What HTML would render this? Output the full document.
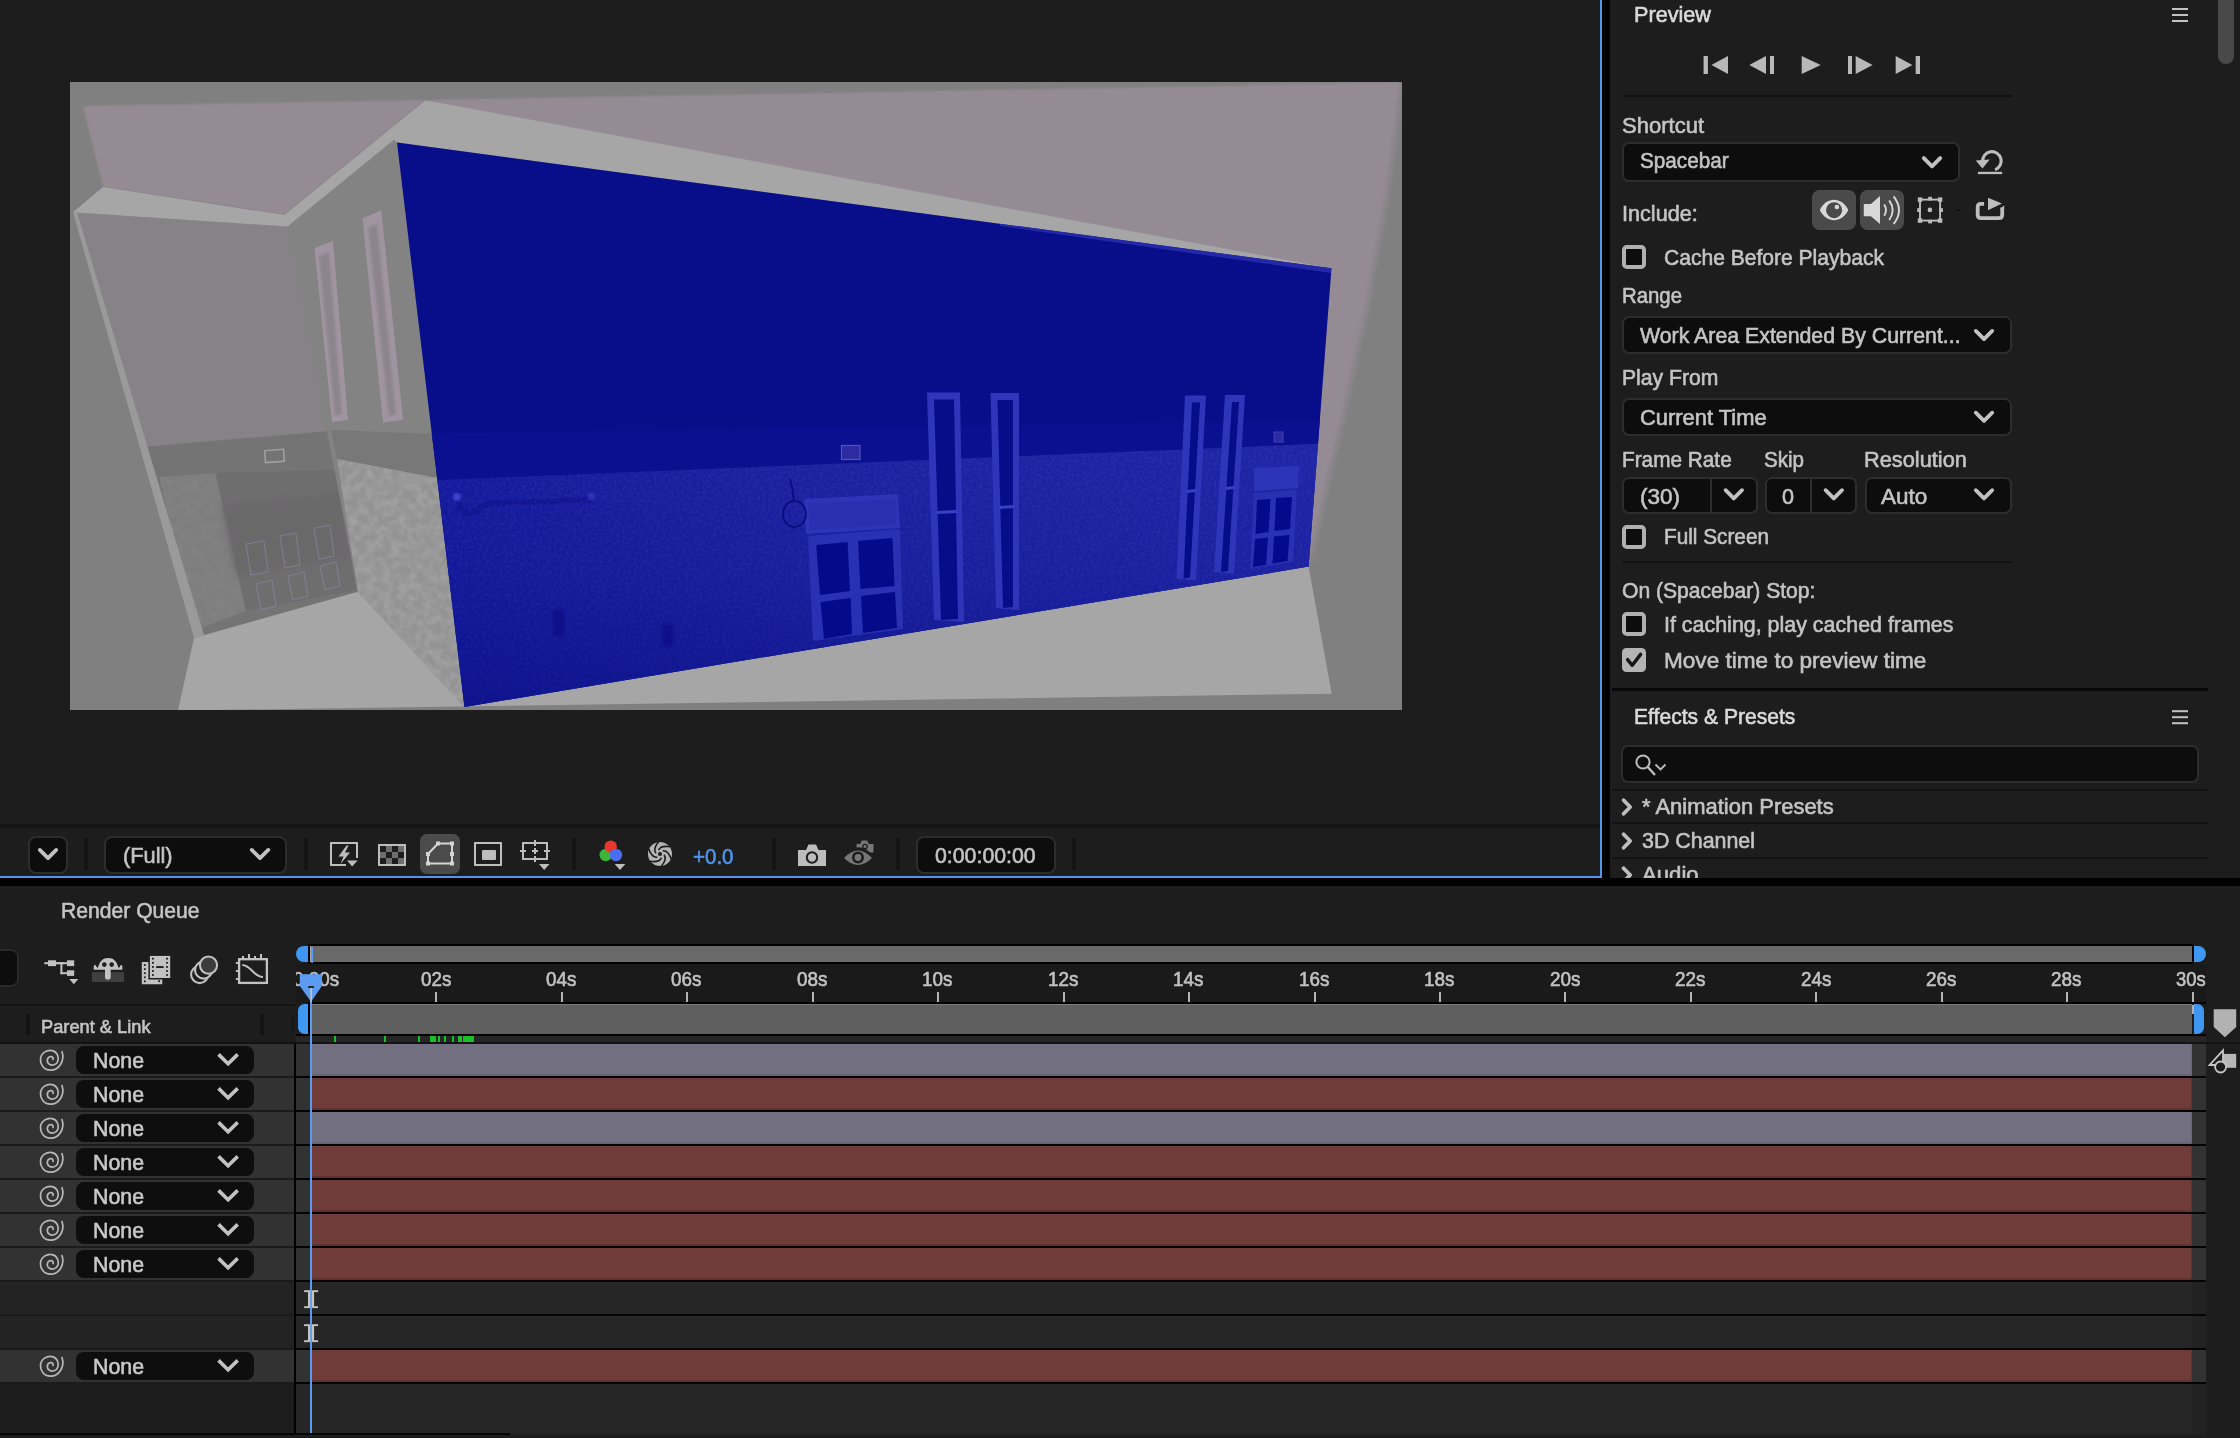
<!DOCTYPE html>
<html><head><meta charset="utf-8"><title>After Effects</title>
<style>
html,body{margin:0;padding:0;}
body{width:2240px;height:1438px;background:#1d1d1d;overflow:hidden;position:relative;font-family:"Liberation Sans",sans-serif;}
#root{position:absolute;left:0;top:0;width:2240px;height:1438px;overflow:hidden;}
#root>div{position:absolute;box-sizing:border-box;}
.t{white-space:nowrap;line-height:1;transform-origin:0 0;-webkit-text-stroke:0.6px currentColor;}
svg{position:absolute;left:0;top:0;}
</style></head><body><div id="root">
<div style="left:0px;top:824px;width:1600px;height:4px;background:#151515;"></div>
<div style="left:1600px;top:0px;width:2px;height:878px;background:#5296ec;"></div>
<div style="left:0px;top:876px;width:1602px;height:2px;background:#5296ec;"></div>
<div style="left:1602px;top:0px;width:8px;height:878px;background:#000;"></div>
<div style="left:0px;top:878px;width:2240px;height:8px;background:#000;"></div>
<div style="left:28px;top:836px;width:40px;height:38px;background:#0d0d0d;border:2px solid #2d2d2d;border-radius:8px;"></div>
<div style="left:84px;top:838px;width:4px;height:32px;background:#131313;"></div>
<div style="left:104px;top:836px;width:183px;height:38px;background:#0d0d0d;border:2px solid #2d2d2d;border-radius:8px;"></div>
<div class="t" style="left:122.7px;top:845.18px;font-size:22px;color:#c4c4c4;transform:scaleX(0.9900);">(Full)</div>
<div style="left:304px;top:838px;width:4px;height:32px;background:#131313;"></div>
<div style="left:420px;top:834px;width:40px;height:40px;background:#4b4b4b;border-radius:7px;"></div>
<div style="left:572px;top:838px;width:4px;height:32px;background:#131313;"></div>
<div class="t" style="left:692.5px;top:845.98px;font-size:22px;color:#4e94ea;transform:scaleX(0.9325);">+0.0</div>
<div style="left:772px;top:838px;width:4px;height:32px;background:#131313;"></div>
<div style="left:896px;top:838px;width:4px;height:32px;background:#131313;"></div>
<div style="left:916px;top:836px;width:140px;height:38px;background:#0d0d0d;border:2px solid #2d2d2d;border-radius:8px;"></div>
<div class="t" style="left:935.2px;top:844.98px;font-size:22px;color:#c4c4c4;transform:scaleX(0.9684);">0:00:00:00</div>
<div style="left:1072px;top:838px;width:4px;height:32px;background:#131313;"></div>
<div style="left:2218px;top:-10px;width:16px;height:74.2px;background:#494949;border-radius:8px;"></div>
<div class="t" style="left:1634.3px;top:3.98px;font-size:22px;color:#dadada;transform:scaleX(0.9841);">Preview</div>
<div style="left:1622px;top:94.5px;width:390px;height:2px;background:#121212;"></div>
<div class="t" style="left:1622.3px;top:114.78px;font-size:22px;color:#c4c4c4;transform:scaleX(1.0008);">Shortcut</div>
<div style="left:1622px;top:142px;width:338px;height:40px;background:#0d0d0d;border:2px solid #2d2d2d;border-radius:7px;"></div>
<div class="t" style="left:1640px;top:150.38px;font-size:22px;color:#c4c4c4;transform:scaleX(0.9408);">Spacebar</div>
<div class="t" style="left:1622.3px;top:203.38px;font-size:22px;color:#c4c4c4;transform:scaleX(0.9824);">Include:</div>
<div style="left:1812px;top:190px;width:44px;height:40px;background:#4a4a4a;border-radius:7.5px;"></div>
<div style="left:1860px;top:190px;width:44px;height:40px;background:#4a4a4a;border-radius:7.5px;"></div>
<div style="left:1956px;top:208.8px;width:4.2px;height:2.1px;background:#0f0f0f;"></div>
<div style="left:1622px;top:245px;width:24.3px;height:24.3px;background:#0d0d0d;border:4px solid #b0b0b0;border-radius:4.8px;"></div>
<div class="t" style="left:1664.3px;top:247.08px;font-size:22px;color:#c4c4c4;transform:scaleX(0.9569);">Cache Before Playback</div>
<div class="t" style="left:1622.3px;top:284.98px;font-size:22px;color:#c4c4c4;transform:scaleX(0.9255);">Range</div>
<div style="left:1622px;top:316px;width:390px;height:38px;background:#0d0d0d;border:2px solid #2d2d2d;border-radius:7px;"></div>
<div class="t" style="left:1640px;top:325.28px;font-size:22px;color:#c4c4c4;transform:scaleX(0.9687);">Work Area Extended By Current...</div>
<div class="t" style="left:1622.3px;top:367.08px;font-size:22px;color:#c4c4c4;transform:scaleX(0.9607);">Play From</div>
<div style="left:1622px;top:398px;width:390px;height:38px;background:#0d0d0d;border:2px solid #2d2d2d;border-radius:7px;"></div>
<div class="t" style="left:1640px;top:407.08px;font-size:22px;color:#c4c4c4;transform:scaleX(0.9957);">Current Time</div>
<div class="t" style="left:1622.3px;top:449.08px;font-size:22px;color:#c4c4c4;transform:scaleX(0.9445);">Frame Rate</div>
<div class="t" style="left:1764.3px;top:449.08px;font-size:22px;color:#c4c4c4;transform:scaleX(0.9346);">Skip</div>
<div class="t" style="left:1864.3px;top:449.08px;font-size:22px;color:#c4c4c4;transform:scaleX(0.9899);">Resolution</div>
<div style="left:1622px;top:476.5px;width:135.6px;height:37px;background:#0d0d0d;border:2px solid #2d2d2d;border-radius:7px;"></div>
<div style="left:1709.8px;top:478.5px;width:2.2px;height:33px;background:#2d2d2d;"></div>
<div class="t" style="left:1640px;top:485.58px;font-size:22px;color:#c4c4c4;transform:scaleX(1.0224);">(30)</div>
<div style="left:1765px;top:476.5px;width:92px;height:37px;background:#0d0d0d;border:2px solid #2d2d2d;border-radius:7px;"></div>
<div style="left:1809.8px;top:478.5px;width:2.2px;height:33px;background:#2d2d2d;"></div>
<div class="t" style="left:1782px;top:485.58px;font-size:22px;color:#c4c4c4;transform:scaleX(0.9807);">0</div>
<div style="left:1864.5px;top:476.5px;width:147.5px;height:37px;background:#0d0d0d;border:2px solid #2d2d2d;border-radius:7px;"></div>
<div class="t" style="left:1881.4px;top:485.58px;font-size:22px;color:#c4c4c4;transform:scaleX(1.0230);">Auto</div>
<div style="left:1622px;top:524.5px;width:24.3px;height:24.3px;background:#0d0d0d;border:4px solid #b0b0b0;border-radius:4.8px;"></div>
<div class="t" style="left:1664.3px;top:526.38px;font-size:22px;color:#c4c4c4;transform:scaleX(0.9436);">Full Screen</div>
<div style="left:1622px;top:560.5px;width:390px;height:2px;background:#121212;"></div>
<div class="t" style="left:1622.3px;top:579.98px;font-size:22px;color:#c4c4c4;transform:scaleX(0.9585);">On (Spacebar) Stop:</div>
<div style="left:1622px;top:612px;width:24.3px;height:24.3px;background:#0d0d0d;border:4px solid #b0b0b0;border-radius:4.8px;"></div>
<div class="t" style="left:1664.3px;top:614.38px;font-size:22px;color:#c4c4c4;transform:scaleX(0.9739);">If caching, play cached frames</div>
<div style="left:1622px;top:647.9px;width:24.3px;height:24.3px;background:#b4b4b4;border-radius:4.5px;"></div>
<div class="t" style="left:1664.3px;top:650.18px;font-size:22px;color:#c4c4c4;transform:scaleX(1.0265);">Move time to preview time</div>
<div style="left:1612px;top:688px;width:596px;height:2.5px;background:#080808;"></div>
<div class="t" style="left:1634.3px;top:706.38px;font-size:22px;color:#dadada;transform:scaleX(0.9588);">Effects &amp; Presets</div>
<div style="left:1620.5px;top:745px;width:578.5px;height:38px;background:#0d0d0d;border:2px solid #2d2d2d;border-radius:7px;"></div>
<div style="left:1612px;top:788.5px;width:596px;height:2px;background:#121212;"></div>
<div class="t" style="left:1642px;top:795.68px;font-size:22px;color:#c4c4c4;transform:scaleX(0.9985);">* Animation Presets</div>
<div style="left:1612px;top:822px;width:596px;height:2px;background:#121212;"></div>
<div class="t" style="left:1642.3px;top:829.58px;font-size:22px;color:#c4c4c4;transform:scaleX(0.9725);">3D Channel</div>
<div style="left:1612px;top:857px;width:596px;height:2px;background:#121212;"></div>
<div style="left:1612px;top:858px;width:600px;height:20px;overflow:hidden;"><div class="t" style="position:absolute;left:30.3px;top:5.68px;font-size:22px;color:#c4c4c4;transform:scaleX(1.0059)">Audio</div><svg width="40" height="20" style="left:0;top:0"><path d="M11.6,10.2 L18.2,17 L11.6,23.8" fill="none" stroke="#bdbdbd" stroke-width="3.8" stroke-linejoin="round" stroke-linecap="round"/></svg></div>
<div class="t" style="left:60.6px;top:899.98px;font-size:22px;color:#c4c4c4;transform:scaleX(0.9603);">Render Queue</div>
<div style="left:-8px;top:948.5px;width:27px;height:38.5px;background:#0d0d0d;border:2px solid #2a2a2a;border-radius:8px;"></div>
<div style="left:308.2px;top:944px;width:1885.8px;height:20px;background:#000;"></div>
<div style="left:309.7px;top:946px;width:1882.3px;height:16px;background:#696969;"></div>
<div style="left:309.7px;top:946px;width:1.3px;height:16px;background:#a8a8a8;"></div>
<div style="left:311px;top:947px;width:1.9px;height:15.6px;background:#5b9cf2;border-radius:1px;"></div>
<div style="left:296px;top:946px;width:12.2px;height:16.1px;background:#3f97f2;border-radius:8.5px 0 0 8.5px;"></div>
<div style="left:2194px;top:946px;width:12px;height:16.2px;background:#3f97f2;border-radius:0 9px 9px 0;"></div>
<div style="left:296px;top:964px;width:1910px;height:38.5px;background:#1a1a1a;"></div>
<div style="left:296px;top:966px;width:60px;height:30px;overflow:hidden;"><div class="t" style="position:absolute;left:-3.5px;top:3.89px;font-size:19.5px;color:#c2c2c2;transform:scaleX(0.9669)">0:00s</div></div>
<div style="left:435.4px;top:992px;width:2px;height:10.5px;background:#b4b4b4;"></div>
<div class="t" style="left:420.5px;top:969.89px;font-size:19.5px;color:#c2c2c2;transform:scaleX(0.9669);">02s</div>
<div style="left:560.8px;top:992px;width:2px;height:10.5px;background:#b4b4b4;"></div>
<div class="t" style="left:546.0px;top:969.89px;font-size:19.5px;color:#c2c2c2;transform:scaleX(0.9669);">04s</div>
<div style="left:686.3px;top:992px;width:2px;height:10.5px;background:#b4b4b4;"></div>
<div class="t" style="left:671.4px;top:969.89px;font-size:19.5px;color:#c2c2c2;transform:scaleX(0.9669);">06s</div>
<div style="left:811.7px;top:992px;width:2px;height:10.5px;background:#b4b4b4;"></div>
<div class="t" style="left:796.9px;top:969.89px;font-size:19.5px;color:#c2c2c2;transform:scaleX(0.9669);">08s</div>
<div style="left:937.2px;top:992px;width:2px;height:10.5px;background:#b4b4b4;"></div>
<div class="t" style="left:922.3px;top:969.89px;font-size:19.5px;color:#c2c2c2;transform:scaleX(0.9669);">10s</div>
<div style="left:1062.6px;top:992px;width:2px;height:10.5px;background:#b4b4b4;"></div>
<div class="t" style="left:1047.8px;top:969.89px;font-size:19.5px;color:#c2c2c2;transform:scaleX(0.9669);">12s</div>
<div style="left:1188.1px;top:992px;width:2px;height:10.5px;background:#b4b4b4;"></div>
<div class="t" style="left:1173.2px;top:969.89px;font-size:19.5px;color:#c2c2c2;transform:scaleX(0.9669);">14s</div>
<div style="left:1313.5px;top:992px;width:2px;height:10.5px;background:#b4b4b4;"></div>
<div class="t" style="left:1298.7px;top:969.89px;font-size:19.5px;color:#c2c2c2;transform:scaleX(0.9669);">16s</div>
<div style="left:1439.0px;top:992px;width:2px;height:10.5px;background:#b4b4b4;"></div>
<div class="t" style="left:1424.1px;top:969.89px;font-size:19.5px;color:#c2c2c2;transform:scaleX(0.9669);">18s</div>
<div style="left:1564.4px;top:992px;width:2px;height:10.5px;background:#b4b4b4;"></div>
<div class="t" style="left:1549.6px;top:969.89px;font-size:19.5px;color:#c2c2c2;transform:scaleX(0.9669);">20s</div>
<div style="left:1689.9px;top:992px;width:2px;height:10.5px;background:#b4b4b4;"></div>
<div class="t" style="left:1675.0px;top:969.89px;font-size:19.5px;color:#c2c2c2;transform:scaleX(0.9669);">22s</div>
<div style="left:1815.3px;top:992px;width:2px;height:10.5px;background:#b4b4b4;"></div>
<div class="t" style="left:1800.5px;top:969.89px;font-size:19.5px;color:#c2c2c2;transform:scaleX(0.9669);">24s</div>
<div style="left:1940.8px;top:992px;width:2px;height:10.5px;background:#b4b4b4;"></div>
<div class="t" style="left:1926.0px;top:969.89px;font-size:19.5px;color:#c2c2c2;transform:scaleX(0.9669);">26s</div>
<div style="left:2066.2px;top:992px;width:2px;height:10.5px;background:#b4b4b4;"></div>
<div class="t" style="left:2051.4px;top:969.89px;font-size:19.5px;color:#c2c2c2;transform:scaleX(0.9669);">28s</div>
<div style="left:2191.7px;top:992px;width:2px;height:10.5px;background:#b4b4b4;"></div>
<div class="t" style="left:2175.8px;top:969.89px;font-size:19.5px;color:#c2c2c2;transform:scaleX(0.9415);">30s</div>
<div style="left:308.2px;top:1002px;width:1897.8px;height:2.2px;background:#000;"></div>
<div style="left:308.2px;top:1004px;width:4px;height:30px;background:#000;"></div>
<div style="left:312px;top:1004px;width:1880px;height:30px;background:#5f5f5f;border-top:1.5px solid #797979;"></div>
<div style="left:297.9px;top:1004px;width:10.3px;height:30px;background:#3f97f2;border-radius:6.5px 0 0 6.5px;"></div>
<div style="left:2194px;top:1004px;width:10.2px;height:30px;background:#3f97f2;border-radius:0 6.5px 6.5px 0;"></div>
<div style="left:2192px;top:1004.5px;width:1.8px;height:9.5px;background:#b0b0b0;"></div>
<div style="left:296px;top:1034px;width:1910px;height:2px;background:#000;"></div>
<div style="left:296px;top:1036px;width:1910px;height:6.3px;background:#262626;"></div>
<div style="left:334px;top:1036.3px;width:2px;height:5.6px;background:#17c127;"></div>
<div style="left:384px;top:1036.3px;width:2px;height:5.6px;background:#17c127;"></div>
<div style="left:418px;top:1036.3px;width:2px;height:5.6px;background:#17c127;"></div>
<div style="left:430px;top:1036.3px;width:6px;height:5.6px;background:#17c127;"></div>
<div style="left:438px;top:1036.3px;width:2.2px;height:5.6px;background:#17c127;"></div>
<div style="left:444.2px;top:1036.3px;width:1.8px;height:5.6px;background:#17c127;"></div>
<div style="left:452.2px;top:1036.3px;width:1.8px;height:5.6px;background:#17c127;"></div>
<div style="left:458px;top:1036.3px;width:4px;height:5.6px;background:#17c127;"></div>
<div style="left:463.4px;top:1036.3px;width:10.9px;height:5.6px;background:#17c127;"></div>
<div style="left:0px;top:1042.3px;width:2240px;height:1.9px;background:#131313;"></div>
<div style="left:0px;top:1003.6px;width:294.5px;height:2px;background:#131313;"></div>
<div style="left:26.4px;top:1014.3px;width:3.3px;height:21.2px;background:#131313;"></div>
<div style="left:260.3px;top:1014.3px;width:3.3px;height:21.2px;background:#131313;"></div>
<div style="left:292.1px;top:1014.3px;width:1.6px;height:21.2px;background:#161616;"></div>
<div class="t" style="left:40.5px;top:1016.82px;font-size:19px;color:#c4c4c4;transform:scaleX(0.9600);">Parent &amp; Link</div>
<div style="left:0px;top:1044px;width:294px;height:32.3px;background:#323232;"></div>
<div style="left:296px;top:1044px;width:1910px;height:32.3px;background:#323232;"></div>
<div style="left:312px;top:1044px;width:1880px;height:32.3px;background:#727080;border-bottom:2px solid #67657a;border-right:1.5px solid #67657a;"></div>
<div style="left:76px;top:1046px;width:178px;height:28px;background:#0e0e0e;border-radius:8px;"></div>
<div class="t" style="left:92.8px;top:1049.98px;font-size:22px;color:#c8c8c8;transform:scaleX(0.9697);">None</div>
<div style="left:0px;top:1076.3px;width:294px;height:1.7px;background:#1b1b1b;"></div>
<div style="left:296px;top:1076.3px;width:1910px;height:1.7px;background:#050505;"></div>
<div style="left:0px;top:1078px;width:294px;height:32.3px;background:#323232;"></div>
<div style="left:296px;top:1078px;width:1910px;height:32.3px;background:#323232;"></div>
<div style="left:312px;top:1078px;width:1880px;height:32.3px;background:#703c3a;border-bottom:2px solid #62302f;border-right:1.5px solid #62302f;"></div>
<div style="left:76px;top:1080px;width:178px;height:28px;background:#0e0e0e;border-radius:8px;"></div>
<div class="t" style="left:92.8px;top:1083.98px;font-size:22px;color:#c8c8c8;transform:scaleX(0.9697);">None</div>
<div style="left:0px;top:1110.3px;width:294px;height:1.7px;background:#1b1b1b;"></div>
<div style="left:296px;top:1110.3px;width:1910px;height:1.7px;background:#050505;"></div>
<div style="left:0px;top:1112px;width:294px;height:32.3px;background:#323232;"></div>
<div style="left:296px;top:1112px;width:1910px;height:32.3px;background:#323232;"></div>
<div style="left:312px;top:1112px;width:1880px;height:32.3px;background:#727080;border-bottom:2px solid #67657a;border-right:1.5px solid #67657a;"></div>
<div style="left:76px;top:1114px;width:178px;height:28px;background:#0e0e0e;border-radius:8px;"></div>
<div class="t" style="left:92.8px;top:1117.98px;font-size:22px;color:#c8c8c8;transform:scaleX(0.9697);">None</div>
<div style="left:0px;top:1144.3px;width:294px;height:1.7px;background:#1b1b1b;"></div>
<div style="left:296px;top:1144.3px;width:1910px;height:1.7px;background:#050505;"></div>
<div style="left:0px;top:1146px;width:294px;height:32.3px;background:#323232;"></div>
<div style="left:296px;top:1146px;width:1910px;height:32.3px;background:#323232;"></div>
<div style="left:312px;top:1146px;width:1880px;height:32.3px;background:#703c3a;border-bottom:2px solid #62302f;border-right:1.5px solid #62302f;"></div>
<div style="left:76px;top:1148px;width:178px;height:28px;background:#0e0e0e;border-radius:8px;"></div>
<div class="t" style="left:92.8px;top:1151.98px;font-size:22px;color:#c8c8c8;transform:scaleX(0.9697);">None</div>
<div style="left:0px;top:1178.3px;width:294px;height:1.7px;background:#1b1b1b;"></div>
<div style="left:296px;top:1178.3px;width:1910px;height:1.7px;background:#050505;"></div>
<div style="left:0px;top:1180px;width:294px;height:32.3px;background:#323232;"></div>
<div style="left:296px;top:1180px;width:1910px;height:32.3px;background:#323232;"></div>
<div style="left:312px;top:1180px;width:1880px;height:32.3px;background:#703c3a;border-bottom:2px solid #62302f;border-right:1.5px solid #62302f;"></div>
<div style="left:76px;top:1182px;width:178px;height:28px;background:#0e0e0e;border-radius:8px;"></div>
<div class="t" style="left:92.8px;top:1185.98px;font-size:22px;color:#c8c8c8;transform:scaleX(0.9697);">None</div>
<div style="left:0px;top:1212.3px;width:294px;height:1.7px;background:#1b1b1b;"></div>
<div style="left:296px;top:1212.3px;width:1910px;height:1.7px;background:#050505;"></div>
<div style="left:0px;top:1214px;width:294px;height:32.3px;background:#323232;"></div>
<div style="left:296px;top:1214px;width:1910px;height:32.3px;background:#323232;"></div>
<div style="left:312px;top:1214px;width:1880px;height:32.3px;background:#703c3a;border-bottom:2px solid #62302f;border-right:1.5px solid #62302f;"></div>
<div style="left:76px;top:1216px;width:178px;height:28px;background:#0e0e0e;border-radius:8px;"></div>
<div class="t" style="left:92.8px;top:1219.98px;font-size:22px;color:#c8c8c8;transform:scaleX(0.9697);">None</div>
<div style="left:0px;top:1246.3px;width:294px;height:1.7px;background:#1b1b1b;"></div>
<div style="left:296px;top:1246.3px;width:1910px;height:1.7px;background:#050505;"></div>
<div style="left:0px;top:1248px;width:294px;height:32.3px;background:#323232;"></div>
<div style="left:296px;top:1248px;width:1910px;height:32.3px;background:#323232;"></div>
<div style="left:312px;top:1248px;width:1880px;height:32.3px;background:#703c3a;border-bottom:2px solid #62302f;border-right:1.5px solid #62302f;"></div>
<div style="left:76px;top:1250px;width:178px;height:28px;background:#0e0e0e;border-radius:8px;"></div>
<div class="t" style="left:92.8px;top:1253.98px;font-size:22px;color:#c8c8c8;transform:scaleX(0.9697);">None</div>
<div style="left:0px;top:1280.3px;width:294px;height:1.7px;background:#1b1b1b;"></div>
<div style="left:296px;top:1280.3px;width:1910px;height:1.7px;background:#050505;"></div>
<div style="left:0px;top:1282px;width:294px;height:32.3px;background:#232323;"></div>
<div style="left:296px;top:1282px;width:1896px;height:32.3px;background:#262626;"></div>
<div style="left:2192px;top:1282px;width:14px;height:32.3px;background:#222;"></div>
<div style="left:0px;top:1314.3px;width:294px;height:1.7px;background:#1b1b1b;"></div>
<div style="left:296px;top:1314.3px;width:1910px;height:1.7px;background:#050505;"></div>
<div style="left:0px;top:1316px;width:294px;height:32.3px;background:#232323;"></div>
<div style="left:296px;top:1316px;width:1896px;height:32.3px;background:#262626;"></div>
<div style="left:2192px;top:1316px;width:14px;height:32.3px;background:#222;"></div>
<div style="left:0px;top:1348.3px;width:294px;height:1.7px;background:#1b1b1b;"></div>
<div style="left:296px;top:1348.3px;width:1910px;height:1.7px;background:#050505;"></div>
<div style="left:0px;top:1350px;width:294px;height:32.3px;background:#323232;"></div>
<div style="left:296px;top:1350px;width:1910px;height:32.3px;background:#323232;"></div>
<div style="left:312px;top:1350px;width:1880px;height:32.3px;background:#703c3a;border-bottom:2px solid #62302f;border-right:1.5px solid #62302f;"></div>
<div style="left:76px;top:1352px;width:178px;height:28px;background:#0e0e0e;border-radius:8px;"></div>
<div class="t" style="left:92.8px;top:1355.98px;font-size:22px;color:#c8c8c8;transform:scaleX(0.9697);">None</div>
<div style="left:0px;top:1382.3px;width:294px;height:1.7px;background:#1b1b1b;"></div>
<div style="left:296px;top:1382.3px;width:1910px;height:1.7px;background:#050505;"></div>
<div style="left:0px;top:1384px;width:294px;height:49px;background:#1d1d1d;"></div>
<div style="left:296px;top:1384px;width:1896px;height:48.5px;background:#262626;"></div>
<div style="left:2192px;top:1384px;width:14px;height:48.5px;background:#222;"></div>
<div style="left:294px;top:1043.5px;width:2px;height:390px;background:#000;"></div>
<div style="left:310.1px;top:1000px;width:2.1px;height:433px;background:#5b9cf2;"></div>
<div style="left:0px;top:1433px;width:2240px;height:5px;background:#1d1d1d;"></div>
<div style="left:0px;top:1433.3px;width:510px;height:2px;background:#060606;"></div>
<div style="left:510px;top:1433.3px;width:1696px;height:2px;background:#202020;"></div>
<svg width="2240" height="1438" viewBox="0 0 2240 1438">
<defs>
<clipPath id="imgclip"><rect x="70" y="82" width="1332" height="628"/></clipPath>
<clipPath id="blueclip"><polygon points="397,142.6 1331.5,268.3 1308.6,566.6 464.5,706.9"/></clipPath>
<filter id="b1" x="-20%" y="-20%" width="140%" height="140%"><feGaussianBlur stdDeviation="1"/></filter>
<filter id="b3" x="-20%" y="-20%" width="140%" height="140%"><feGaussianBlur stdDeviation="3"/></filter>
<filter id="noise" x="0" y="0" width="100%" height="100%"><feTurbulence type="fractalNoise" baseFrequency="0.35" numOctaves="3" seed="3" result="n"/><feColorMatrix type="matrix" values="0 0 0 0 0.35  0 0 0 0 0.38  0 0 0 0 0.9  0.9 0 0 0 -0.32"/><feComposite in2="SourceGraphic" operator="in"/></filter>
<filter id="stone" x="0" y="0" width="100%" height="100%"><feTurbulence type="fractalNoise" baseFrequency="0.12" numOctaves="2" seed="7"/><feColorMatrix type="matrix" values="0 0 0 0 0.72  0 0 0 0 0.72  0 0 0 0 0.72  1.6 0 0 0 -0.55"/><feComposite in2="SourceGraphic" operator="in"/></filter>
<linearGradient id="brickv" gradientUnits="userSpaceOnUse" x1="0" y1="450" x2="0" y2="700"><stop offset="0" stop-color="#04087a" stop-opacity="0"/><stop offset="0.5" stop-color="#04087a" stop-opacity="0.12"/><stop offset="1" stop-color="#04087a" stop-opacity="0.45"/></linearGradient>
<linearGradient id="brickg" gradientUnits="userSpaceOnUse" x1="430" y1="0" x2="1320" y2="0"><stop offset="0" stop-color="#141a9c"/><stop offset="0.4" stop-color="#1a20a0"/><stop offset="1" stop-color="#1e24a6"/></linearGradient>
</defs>
<g clip-path="url(#imgclip)">
<rect x="70" y="82" width="1332" height="628" fill="#808080"/>
<polygon points="1250,86 1402,83 1389,183 1366.5,309.5 1344,413 1321,513 1309,567 1300,300 1250,200" fill="#958b94" filter="url(#b3)"/>
<polygon points="83,106 1398,83 1383,183 1360,309.5 1338,413 1316,513 1309,560 1300,300 425.5,100.2 284.3,215 103,187" fill="#958b94" filter="url(#b1)"/>
<polygon points="73,212.3 287.4,226.5 358,591.7 194,638" fill="#868386"/>
<polygon points="140.5,447 331,431 358,591.7 194,638" fill="#757475"/>
<polygon points="159,477 215,473 246,611 196,630" fill="#7f7e7f"/>
<polygon points="159,477 215,473 246,611 196,630" fill="#fff" filter="url(#stone)" opacity="0.07"/>
<polygon points="216,473 336,470 356,590 246,611" fill="#6f6e6f"/>
<polygon points="222,505 342,492 349,560 236,575" fill="#6a696a" filter="url(#b3)"/>
<polygon points="73,212.3 77,212.6 204,635 194,638" fill="#9a9a9a"/>
<rect x="265" y="450" width="19" height="12" fill="none" stroke="#a2a0a2" stroke-width="1.5" transform="rotate(-4 274 456)"/>
<g fill="none" stroke="#85839a" stroke-width="1" opacity="0.8"><polygon points="246,544 264,541 268,572 251,575"/><polygon points="280,536 296,533 300,565 285,568"/><polygon points="314,528 330,525 334,556 319,559"/><polygon points="256,584 272,580 276,606 261,610"/><polygon points="288,576 304,572 308,596 293,600"/><polygon points="320,566 336,562 340,586 325,590"/></g>
<polygon points="287.4,226.5 393.8,139.9 397,142.6 464.5,706.9 358,591.7" fill="#848384"/>
<polygon points="331,430 432,434 437,478 337,459" fill="#787878"/>
<polygon points="337,459 437,478 464.5,706.9 358,591.7" fill="#939393"/>
<polygon points="337,459 437,478 464.5,706.9 358,591.7" fill="#fff" filter="url(#stone)" opacity="0.28"/>
<polygon points="314.5,248 333,241 348,420 332,422" fill="#a094a0"/>
<polygon points="362.5,218.5 381.3,210.2 403,420 383,422.6" fill="#a094a0"/>
<polygon points="319,256 329,252 342,414 335,416" fill="#8d858e" filter="url(#b1)"/>
<polygon points="368,228 377,224 396,414 389,416" fill="#8d858e" filter="url(#b1)"/>
<polygon points="103,187 284.3,215 425.5,100.2 1331.5,268.3 397,142.6 393.8,139.9 287.4,226.5 73,212.3" fill="#a6a6a6"/>
<polygon points="194,638 358,591.7 464.5,706.9 1308.6,566.6 1331.7,693.7 178,710.5" fill="#a6a6a6"/>
<polygon points="397,142.6 1331.5,268.3 1308.6,566.6 464.5,706.9" fill="#080e8a"/>
<g clip-path="url(#blueclip)">
<polygon points="390,434 1340,420 1340,446 390,482" fill="#0a1090"/>
<polygon points="390,482 1340,443 1340,720 390,720" fill="url(#brickg)"/>
<polygon points="390,482 1340,443 1340,720 390,720" fill="#fff" filter="url(#noise)" opacity="0.22"/>
<polygon points="390,482 1340,443 1340,720 390,720" fill="url(#brickv)"/>
<rect x="553" y="610" width="11" height="26" fill="#080d86" opacity="0.8" filter="url(#b1)"/>
<rect x="662" y="624" width="11" height="22" fill="#080d86" opacity="0.8" filter="url(#b1)"/>
<polygon points="1000,222 1331.5,266.5 1331,273 1000,226" fill="#2a30b0" opacity="0.8"/>
<polygon points="927,392.5 960,392.5 964,622 934,620" fill="#2f35b8"/>
<polygon points="934,399.5 954,399.5 958,619 941,620" fill="#070c88"/>
<polygon points="936.6143790849674,511 957.0653594771242,510 957.0653594771242,513 936.6143790849674,514" fill="#3a40c4"/>
<polygon points="990.5,393 1019,393 1019,610 996,608" fill="#2f35b8"/>
<polygon points="997.5,400 1013,400 1013,607 1003,608" fill="#070c88"/>
<polygon points="999.3640552995391,506 1014.0,505 1014.0,508 999.3640552995391,509" fill="#3a40c4"/>
<polygon points="1185,395.5 1206,395.5 1196,580.5 1176.5,578.5" fill="#2f35b8"/>
<polygon points="1192,402.5 1200,402.5 1190,577.5 1183.5,578.5" fill="#070c88"/>
<polygon points="1186.658108108108,490 1195.8918918918919,489 1195.8918918918919,492 1186.658108108108,493" fill="#3a40c4"/>
<polygon points="1225,395 1245,395 1234,574 1214,572" fill="#2f35b8"/>
<polygon points="1232,402 1239,402 1228,571 1221,572" fill="#070c88"/>
<polygon points="1225.3463687150838,487 1234.3463687150838,486 1234.3463687150838,489 1225.3463687150838,490" fill="#3a40c4"/>
<polygon points="804,499 898,494 900,528 806,534" fill="#2e34b6"/>
<polygon points="808,504 895,499 896,524 810,530" fill="#2a2fb0"/>
<polygon points="808,536 900,529 903,629 813,641" fill="#2a30b2"/>
<polygon points="816.3,545 847.6,542 850,591 820,595" fill="#050a8a"/>
<polygon points="820.5,602 850.7,598 852,634 824,639" fill="#050a8a"/>
<polygon points="858,541 892.5,538 894.5,586 860.5,589" fill="#050a8a"/>
<polygon points="861,596 895,592 897,628 863,633" fill="#050a8a"/>
<rect x="841.5" y="445.5" width="18.5" height="14" fill="#2c2ca0" stroke="#5650b8" stroke-width="1.2"/>
<g fill="none" stroke="#060a78" stroke-width="1.6"><ellipse cx="794.5" cy="514" rx="11.5" ry="13"/><path d="M794 501 L792 486 L790 479"/></g>
<polygon points="1254,468 1299,466 1298,488 1254,491" fill="#2e34b8"/>
<polygon points="1254,493 1297,490 1293,562 1250,569" fill="#2a30b2"/>
<polygon points="1257,500 1270.5,499 1268.5,532 1255.5,534" fill="#050a8a"/>
<polygon points="1276,498 1292,497 1290,529 1274.5,531" fill="#050a8a"/>
<polygon points="1255,539 1268,537.5 1266,565 1253,567" fill="#050a8a"/>
<polygon points="1274,536.5 1289.5,535 1287.5,561 1272.5,563.5" fill="#050a8a"/>
<rect x="1274" y="432" width="9" height="10" fill="#2a2aa4" stroke="#4440b0" stroke-width="1"/>
<path d="M458,500 q4,22 22,8 q6,-5 14,-5 l98,-3" fill="none" stroke="#0a0f80" stroke-width="2.4" opacity="0.75" filter="url(#b1)"/>
<circle cx="457" cy="497" r="4" fill="#4a50d8" opacity="0.8" filter="url(#b1)"/>
<rect x="588" y="493" width="7" height="7" fill="#3a40c8" opacity="0.6" filter="url(#b1)"/>
</g>
</g>
<path d="M39.8,849.9 L48.0,858.1 L56.2,849.9" fill="none" stroke="#c2c2c2" stroke-width="3.8" stroke-linecap="round" stroke-linejoin="round"/>
<path d="M251.8,849.9 L260.0,858.1 L268.2,849.9" fill="none" stroke="#c2c2c2" stroke-width="3.8" stroke-linecap="round" stroke-linejoin="round"/>
<path d="M357,858 V843 H331 V865 H346" fill="none" stroke="#bdbdbd" stroke-width="2"/>
<polygon points="346.5,845.5 338.5,856.5 343.5,856.5 340.5,864 350,852.5 345,852.5 348.5,845.5" fill="#bdbdbd"/>
<polygon points="347,860.5 357.5,860.5 352.2,866.5" fill="#bdbdbd"/>
<rect x="379" y="845" width="26" height="20" fill="#1d1d1d" stroke="#bdbdbd" stroke-width="2"/>
<rect x="386" y="846" width="6" height="6" fill="#6e6e6e"/>
<rect x="398" y="846" width="6" height="6" fill="#6e6e6e"/>
<rect x="380" y="852" width="6" height="6" fill="#6e6e6e"/>
<rect x="392" y="852" width="6" height="6" fill="#6e6e6e"/>
<rect x="386" y="858" width="6" height="6" fill="#6e6e6e"/>
<rect x="398" y="858" width="6" height="6" fill="#6e6e6e"/>
<path d="M438,843.5 H452 V863.5 H428 V854 Z" fill="none" stroke="#d4d4d4" stroke-width="2"/>
<rect x="436" y="841.5" width="4" height="4" fill="#d4d4d4"/>
<rect x="450" y="841.5" width="4" height="4" fill="#d4d4d4"/>
<rect x="450" y="852" width="4" height="4" fill="#d4d4d4"/>
<rect x="450" y="861.5" width="4" height="4" fill="#d4d4d4"/>
<rect x="426" y="861.5" width="4" height="4" fill="#d4d4d4"/>
<rect x="426" y="852" width="4" height="4" fill="#d4d4d4"/>
<rect x="475" y="843" width="26" height="22" fill="none" stroke="#bdbdbd" stroke-width="2"/>
<rect x="482" y="850" width="14" height="10" fill="#bdbdbd" rx="1"/>
<rect x="523" y="843" width="24" height="16" fill="none" stroke="#bdbdbd" stroke-width="2"/>
<path d="M535,840 V846 M535,856 V862 M520,851 H526 M544,851 H550 M532,851 H538 M535,848 V854" fill="none" stroke="#bdbdbd" stroke-width="2"/>
<polygon points="539,864 549.5,864 544.2,870" fill="#bdbdbd"/>
<circle cx="605.7" cy="855" r="6.2" fill="#3cb437"/>
<circle cx="610.7" cy="846.6" r="6.2" fill="#e8372c"/>
<circle cx="616" cy="855" r="6.2" fill="#4a6cf0"/>
<polygon points="614.7,864 625.4,864 620,870" fill="#bdbdbd"/>
<circle cx="660" cy="854" r="12" fill="#b4b4b4"/>
<path d="M664.1,854.7 Q667.4,859.2 661.1,866.5" stroke="#1d1d1d" stroke-width="1.6" fill="none"/>
<path d="M661.4,857.9 Q659.2,863.0 649.8,861.2" stroke="#1d1d1d" stroke-width="1.6" fill="none"/>
<path d="M657.3,857.2 Q651.8,857.8 648.7,848.7" stroke="#1d1d1d" stroke-width="1.6" fill="none"/>
<path d="M655.9,853.3 Q652.6,848.8 658.9,841.5" stroke="#1d1d1d" stroke-width="1.6" fill="none"/>
<path d="M658.6,850.1 Q660.8,845.0 670.2,846.8" stroke="#1d1d1d" stroke-width="1.6" fill="none"/>
<path d="M662.7,850.8 Q668.2,850.2 671.3,859.3" stroke="#1d1d1d" stroke-width="1.6" fill="none"/>
<circle cx="660" cy="854" r="2" fill="#1d1d1d"/>
<path d="M798,850 H806 L808.5,844.5 H816 L818.5,850 H826 V866 H798 Z" fill="#bdbdbd"/>
<circle cx="812" cy="857.5" r="5.2" fill="none" stroke="#1d1d1d" stroke-width="2"/>
<path d="M844,858 Q858,843 872,858 Q858,872 844,858 Z" fill="#777"/>
<circle cx="858" cy="857.5" r="6" fill="#1d1d1d"/><circle cx="858" cy="857.5" r="3.4" fill="#777"/>
<path d="M856,843.5 H860 L861.5,840 H867.5 L869,843.5 H874 V853 H870 Q864,847 856,848 Z" fill="#777" stroke="#1d1d1d" stroke-width="1"/>
<circle cx="865" cy="846.5" r="2.2" fill="none" stroke="#1d1d1d" stroke-width="1.3"/>
<rect x="2172" y="8" width="16" height="2" fill="#c2c2c2"/>
<rect x="2172" y="14" width="16" height="2" fill="#c2c2c2"/>
<rect x="2172" y="20" width="16" height="2" fill="#c2c2c2"/>
<rect x="1703.6" y="56" width="4.3" height="18" fill="#b8b8b8"/><polygon points="1728,56 1728,74 1711.4,65" fill="#b8b8b8"/>
<polygon points="1766,56 1766,74 1749.3,65" fill="#b8b8b8"/><rect x="1770" y="56" width="4" height="18" fill="#b8b8b8"/>
<polygon points="1801.7,56 1801.7,74 1820.7,65" fill="#b8b8b8"/>
<rect x="1848" y="56" width="4" height="18" fill="#b8b8b8"/><polygon points="1855.7,56 1855.7,74 1872.6,65" fill="#b8b8b8"/>
<polygon points="1895.7,56 1895.7,74 1912.4,65" fill="#b8b8b8"/><rect x="1915.7" y="56" width="4.3" height="18" fill="#b8b8b8"/>
<path d="M1923.8,158.1 L1932.0,166.3 L1940.2,158.1" fill="none" stroke="#c2c2c2" stroke-width="3.8" stroke-linecap="round" stroke-linejoin="round"/>
<path d="M1982.6,161.5 A9.3,9.3 0 1 1 1995.1,169.7" fill="none" stroke="#bdbdbd" stroke-width="3.1"/>
<polygon points="1975.8,160.4 1989.7,159.4 1982.4,168.4" fill="#bdbdbd"/>
<rect x="1977.9" y="171.8" width="24.3" height="2.3" fill="#bdbdbd"/>
<path d="M1819.8,210 C1826.5,196.4 1841.5,196.4 1848.3,210 C1841.5,223.6 1826.5,223.6 1819.8,210 Z" fill="#d8d8d8"/>
<circle cx="1834.1" cy="210.2" r="8" fill="#4a4a4a"/><circle cx="1836.9" cy="207" r="2.3" fill="#d8d8d8"/>
<path d="M1863.8,204 H1870.9 L1880,196 V224 L1870.9,216.2 H1863.8 Z" fill="#d8d8d8"/>
<path d="M1884.2,204.6 Q1887.8,210.2 1884.2,215.8 M1889.2,200.4 Q1896.2,210.2 1889.2,220 M1893.6,196.3 Q1904.4,210.2 1893.6,224" fill="none" stroke="#d8d8d8" stroke-width="1.9"/>
<rect x="1920" y="199.6" width="20.1" height="21" fill="none" stroke="#bdbdbd" stroke-width="1.9"/>
<rect x="1917.8" y="197.4" width="4.4" height="4.4" fill="#bdbdbd"/>
<rect x="1937.8999999999999" y="197.4" width="4.4" height="4.4" fill="#bdbdbd"/>
<rect x="1917.8" y="218.4" width="4.4" height="4.4" fill="#bdbdbd"/>
<rect x="1937.8999999999999" y="218.4" width="4.4" height="4.4" fill="#bdbdbd"/>
<rect x="1928.1999999999998" y="196.79999999999998" width="3.8" height="3.6" fill="#bdbdbd"/>
<rect x="1928.1999999999998" y="219.79999999999998" width="3.8" height="3.6" fill="#bdbdbd"/>
<rect x="1917.2" y="208.2" width="3.6" height="3.8" fill="#bdbdbd"/>
<rect x="1939.3" y="208.2" width="3.6" height="3.8" fill="#bdbdbd"/>
<circle cx="1929.9" cy="209.9" r="2.3" fill="#bdbdbd"/>
<path d="M1984.1,203.8 H1981 Q1977.7,203.8 1977.7,207 V214.8 Q1977.7,218.1 1981,218.1 H1999 Q2002.2,218.1 2002.2,214.8 V207.5" fill="none" stroke="#bdbdbd" stroke-width="3.8"/>
<polygon points="1988,197.7 1988,210.2 2001.9,203.6" fill="#bdbdbd"/>
<polygon points="2000.3,209 2004.2,205.2 2004.2,209" fill="#bdbdbd"/>
<path d="M1975.8,330.9 L1984.0,339.1 L1992.2,330.9" fill="none" stroke="#c2c2c2" stroke-width="3.8" stroke-linecap="round" stroke-linejoin="round"/>
<path d="M1975.8,412.7 L1984.0,420.9 L1992.2,412.7" fill="none" stroke="#c2c2c2" stroke-width="3.8" stroke-linecap="round" stroke-linejoin="round"/>
<path d="M1725.6,490.2 L1733.8,498.4 L1742.0,490.2" fill="none" stroke="#c2c2c2" stroke-width="3.8" stroke-linecap="round" stroke-linejoin="round"/>
<path d="M1825.6,490.2 L1833.8,498.4 L1842.0,490.2" fill="none" stroke="#c2c2c2" stroke-width="3.8" stroke-linecap="round" stroke-linejoin="round"/>
<path d="M1975.8,490.2 L1984.0,498.4 L1992.2,490.2" fill="none" stroke="#c2c2c2" stroke-width="3.8" stroke-linecap="round" stroke-linejoin="round"/>
<path d="M1627.6,659.6 L1632.3,665.3 L1640.6,654.4" fill="none" stroke="#161616" stroke-width="3.4" stroke-linecap="round" stroke-linejoin="round"/>
<rect x="2172" y="710.2" width="16" height="2" fill="#c2c2c2"/>
<rect x="2172" y="716.2" width="16" height="2" fill="#c2c2c2"/>
<rect x="2172" y="722.2" width="16" height="2" fill="#c2c2c2"/>
<circle cx="1643" cy="762" r="6.6" fill="none" stroke="#bdbdbd" stroke-width="2"/><path d="M1647.8,767 L1655,775" stroke="#bdbdbd" stroke-width="2.4" fill="none"/>
<path d="M1655.5,764.5 L1660.5,769.5 L1665.5,764.5" fill="none" stroke="#bdbdbd" stroke-width="1.8"/>
<path d="M1623.6,800.2 L1630.1999999999998,807 L1623.6,813.8" fill="none" stroke="#bdbdbd" stroke-width="3.8" stroke-linejoin="round" stroke-linecap="round"/>
<path d="M1623.6,834.2 L1630.1999999999998,841 L1623.6,847.8" fill="none" stroke="#bdbdbd" stroke-width="3.8" stroke-linejoin="round" stroke-linecap="round"/>
<g fill="#c2c2c2"><rect x="44.3" y="962.2" width="20" height="2"/><rect x="48" y="960.3" width="8" height="5.8"/><rect x="67" y="960.3" width="7.2" height="5.8"/><rect x="60.4" y="962.2" width="2" height="12"/><rect x="60.4" y="972.2" width="8" height="2"/><rect x="67" y="970.3" width="7.2" height="5.6"/><rect x="56" y="962.2" width="12" height="2"/><polygon points="69.3,979 78.3,979 73.8,984.2"/></g>
<rect x="91.9" y="972.1" width="32.2" height="9.9" fill="#3f3f3f"/>
<path d="M93.7,969.8 V967 Q93.7,965.1 95,965.1 Q96,965.1 96.3,966.5 Q96.7,967.8 98,967.6 C99.5,961 103,957.9 108.2,957.9 C113.4,957.9 117,961 118.4,967.6 Q119.7,967.8 120,966.5 Q120.4,965.1 121.3,965.1 Q122.4,965.1 122.4,967 V969.8 H110.7 V977 Q110.7,979.8 107.85,979.8 Q105,979.8 105,977 V969.8 Z" fill="#c2c2c2"/>
<circle cx="104.3" cy="964.6" r="2.3" fill="#1d1d1d"/><circle cx="111.7" cy="964.6" r="2.3" fill="#1d1d1d"/>
<path d="M141.8,962.1 H148.4 V979.4 H162.3 V984.2 H141.8 Z" fill="#c2c2c2"/>
<rect x="149.9" y="955.9" width="20.3" height="22.1" fill="#c2c2c2"/>
<rect x="152" y="957.8" width="1.8" height="1.8" fill="#1d1d1d"/><rect x="166.1" y="957.8" width="1.8" height="1.8" fill="#1d1d1d"/>
<rect x="152" y="961.9" width="1.8" height="1.8" fill="#1d1d1d"/><rect x="166.1" y="961.9" width="1.8" height="1.8" fill="#1d1d1d"/>
<rect x="152" y="966.0" width="1.8" height="1.8" fill="#1d1d1d"/><rect x="166.1" y="966.0" width="1.8" height="1.8" fill="#1d1d1d"/>
<rect x="152" y="970.0" width="1.8" height="1.8" fill="#1d1d1d"/><rect x="166.1" y="970.0" width="1.8" height="1.8" fill="#1d1d1d"/>
<rect x="152" y="974.1" width="1.8" height="1.8" fill="#1d1d1d"/><rect x="166.1" y="974.1" width="1.8" height="1.8" fill="#1d1d1d"/>
<rect x="143.9" y="964.2" width="1.8" height="1.8" fill="#1d1d1d"/>
<rect x="143.9" y="968.2" width="1.8" height="1.8" fill="#1d1d1d"/>
<rect x="143.9" y="972.3" width="1.8" height="1.8" fill="#1d1d1d"/>
<rect x="143.9" y="976.4" width="1.8" height="1.8" fill="#1d1d1d"/>
<rect x="143.9" y="980.4" width="1.8" height="1.8" fill="#1d1d1d"/>
<rect x="158.2" y="980.3" width="1.8" height="1.8" fill="#1d1d1d"/>
<rect x="156.2" y="966.1" width="7.4" height="1.9" fill="#1d1d1d"/>
<circle cx="199.7" cy="974.5" r="8.6" fill="#1d1d1d" stroke="#c2c2c2" stroke-width="2.1"/>
<circle cx="203.6" cy="970" r="8.6" fill="#1d1d1d" stroke="#c2c2c2" stroke-width="2.1"/>
<circle cx="208.5" cy="965.1" r="8.6" fill="#3c3c3c" stroke="#c2c2c2" stroke-width="2.1"/>
<rect x="239.1" y="959.2" width="27.8" height="23.7" fill="none" stroke="#c2c2c2" stroke-width="2.3"/>
<path d="M243,956 V959 M249,953.9 V959 M255,956 V959 M261,953.9 V959 M235.9,963.1 H238.5 M235.9,971.1 H238.5 M235.9,979 H238.5" stroke="#c2c2c2" stroke-width="2" fill="none"/>
<path d="M242.3,964.9 C251,964.9 253.5,977 263,977" stroke="#c2c2c2" stroke-width="2" fill="none"/>
<polygon points="2213.7,1009.3 2236.2,1009.3 2236.2,1027 2224.9,1037.2 2213.7,1027" fill="#b2b2b2"/>
<rect x="2222" y="1053.9" width="14.2" height="13.9" fill="#b8b8b8"/>
<path d="M2223,1050.3 L2209.6,1065 H2223 Z" fill="#1d1d1d" stroke="#c6c6c6" stroke-width="1.8" stroke-linejoin="miter"/>
<circle cx="2220.6" cy="1067" r="5.5" fill="#1d1d1d" stroke="#c6c6c6" stroke-width="1.8"/>
<path d="M219.8,1055.6 L228.1,1063.7 L236.4,1055.6" fill="none" stroke="#c2c2c2" stroke-width="3.6" stroke-linecap="square" stroke-linejoin="miter"/>
<path d="M61.8,1051.0 C65.5,1061.2 58.5,1070.4 50.5,1070.2 C43.5,1070.0 40.2,1064.2 40.5,1059.2 C40.9,1052.7 47.0,1049.8 52.0,1050.6000000000001 C57.5,1051.6000000000001 59.1,1057.2 57.8,1061.2 C56.5,1065.2 52.0,1065.8 49.3,1064.2 C46.3,1062.4 46.7,1057.8 49.9,1056.8 C52.5,1056.0 54.1,1058.6000000000001 52.5,1060.0" fill="none" stroke="#b8b8b8" stroke-width="1.7"/>
<path d="M219.8,1089.6 L228.1,1097.7 L236.4,1089.6" fill="none" stroke="#c2c2c2" stroke-width="3.6" stroke-linecap="square" stroke-linejoin="miter"/>
<path d="M61.8,1085.0 C65.5,1095.2 58.5,1104.4 50.5,1104.2 C43.5,1104.0 40.2,1098.2 40.5,1093.2 C40.9,1086.7 47.0,1083.8 52.0,1084.6000000000001 C57.5,1085.6000000000001 59.1,1091.2 57.8,1095.2 C56.5,1099.2 52.0,1099.8 49.3,1098.2 C46.3,1096.4 46.7,1091.8 49.9,1090.8 C52.5,1090.0 54.1,1092.6000000000001 52.5,1094.0" fill="none" stroke="#b8b8b8" stroke-width="1.7"/>
<path d="M219.8,1123.6 L228.1,1131.7 L236.4,1123.6" fill="none" stroke="#c2c2c2" stroke-width="3.6" stroke-linecap="square" stroke-linejoin="miter"/>
<path d="M61.8,1119.0 C65.5,1129.2 58.5,1138.4 50.5,1138.2 C43.5,1138.0 40.2,1132.2 40.5,1127.2 C40.9,1120.7 47.0,1117.8 52.0,1118.6000000000001 C57.5,1119.6000000000001 59.1,1125.2 57.8,1129.2 C56.5,1133.2 52.0,1133.8 49.3,1132.2 C46.3,1130.4 46.7,1125.8 49.9,1124.8 C52.5,1124.0 54.1,1126.6000000000001 52.5,1128.0" fill="none" stroke="#b8b8b8" stroke-width="1.7"/>
<path d="M219.8,1157.6 L228.1,1165.7 L236.4,1157.6" fill="none" stroke="#c2c2c2" stroke-width="3.6" stroke-linecap="square" stroke-linejoin="miter"/>
<path d="M61.8,1153.0 C65.5,1163.2 58.5,1172.4 50.5,1172.2 C43.5,1172.0 40.2,1166.2 40.5,1161.2 C40.9,1154.7 47.0,1151.8 52.0,1152.6000000000001 C57.5,1153.6000000000001 59.1,1159.2 57.8,1163.2 C56.5,1167.2 52.0,1167.8 49.3,1166.2 C46.3,1164.4 46.7,1159.8 49.9,1158.8 C52.5,1158.0 54.1,1160.6000000000001 52.5,1162.0" fill="none" stroke="#b8b8b8" stroke-width="1.7"/>
<path d="M219.8,1191.6 L228.1,1199.7 L236.4,1191.6" fill="none" stroke="#c2c2c2" stroke-width="3.6" stroke-linecap="square" stroke-linejoin="miter"/>
<path d="M61.8,1187.0 C65.5,1197.2 58.5,1206.4 50.5,1206.2 C43.5,1206.0 40.2,1200.2 40.5,1195.2 C40.9,1188.7 47.0,1185.8 52.0,1186.6000000000001 C57.5,1187.6000000000001 59.1,1193.2 57.8,1197.2 C56.5,1201.2 52.0,1201.8 49.3,1200.2 C46.3,1198.4 46.7,1193.8 49.9,1192.8 C52.5,1192.0 54.1,1194.6000000000001 52.5,1196.0" fill="none" stroke="#b8b8b8" stroke-width="1.7"/>
<path d="M219.8,1225.6 L228.1,1233.7 L236.4,1225.6" fill="none" stroke="#c2c2c2" stroke-width="3.6" stroke-linecap="square" stroke-linejoin="miter"/>
<path d="M61.8,1221.0 C65.5,1231.2 58.5,1240.4 50.5,1240.2 C43.5,1240.0 40.2,1234.2 40.5,1229.2 C40.9,1222.7 47.0,1219.8 52.0,1220.6000000000001 C57.5,1221.6000000000001 59.1,1227.2 57.8,1231.2 C56.5,1235.2 52.0,1235.8 49.3,1234.2 C46.3,1232.4 46.7,1227.8 49.9,1226.8 C52.5,1226.0 54.1,1228.6000000000001 52.5,1230.0" fill="none" stroke="#b8b8b8" stroke-width="1.7"/>
<path d="M219.8,1259.6 L228.1,1267.7 L236.4,1259.6" fill="none" stroke="#c2c2c2" stroke-width="3.6" stroke-linecap="square" stroke-linejoin="miter"/>
<path d="M61.8,1255.0 C65.5,1265.2 58.5,1274.4 50.5,1274.2 C43.5,1274.0 40.2,1268.2 40.5,1263.2 C40.9,1256.7 47.0,1253.8 52.0,1254.6000000000001 C57.5,1255.6000000000001 59.1,1261.2 57.8,1265.2 C56.5,1269.2 52.0,1269.8 49.3,1268.2 C46.3,1266.4 46.7,1261.8 49.9,1260.8 C52.5,1260.0 54.1,1262.6000000000001 52.5,1264.0" fill="none" stroke="#b8b8b8" stroke-width="1.7"/>
<g fill="#c6c2be"><rect x="304.1" y="1290.2" width="6" height="1.9"/><rect x="312.1" y="1290.2" width="6" height="1.9"/><rect x="304.1" y="1306.2" width="6" height="1.9"/><rect x="312.1" y="1306.2" width="6" height="1.9"/><rect x="308" y="1291" width="2.2" height="16"/><rect x="312" y="1291" width="2.1" height="16"/></g>
<g fill="#c6c2be"><rect x="304.1" y="1324.2" width="6" height="1.9"/><rect x="312.1" y="1324.2" width="6" height="1.9"/><rect x="304.1" y="1340.2" width="6" height="1.9"/><rect x="312.1" y="1340.2" width="6" height="1.9"/><rect x="308" y="1325" width="2.2" height="16"/><rect x="312" y="1325" width="2.1" height="16"/></g>
<path d="M219.8,1361.6 L228.1,1369.7 L236.4,1361.6" fill="none" stroke="#c2c2c2" stroke-width="3.6" stroke-linecap="square" stroke-linejoin="miter"/>
<path d="M61.8,1357.0 C65.5,1367.2 58.5,1376.4 50.5,1376.2 C43.5,1376.0 40.2,1370.2 40.5,1365.2 C40.9,1358.7 47.0,1355.8 52.0,1356.6000000000001 C57.5,1357.6000000000001 59.1,1363.2 57.8,1367.2 C56.5,1371.2 52.0,1371.8 49.3,1370.2 C46.3,1368.4 46.7,1363.8 49.9,1362.8 C52.5,1362.0 54.1,1364.6000000000001 52.5,1366.0" fill="none" stroke="#b8b8b8" stroke-width="1.7"/>
<path d="M299.8,974.2 H321.9 V986.1 L311.6,1001 H310.6 L299.8,986.1 Z" fill="#5b9cf2"/>
<rect x="308.2" y="986.1" width="5.7" height="1.9" fill="#242424"/><rect x="310.3" y="988" width="1.7" height="13.8" fill="#c4bfba"/>
</svg>
</div></body></html>
